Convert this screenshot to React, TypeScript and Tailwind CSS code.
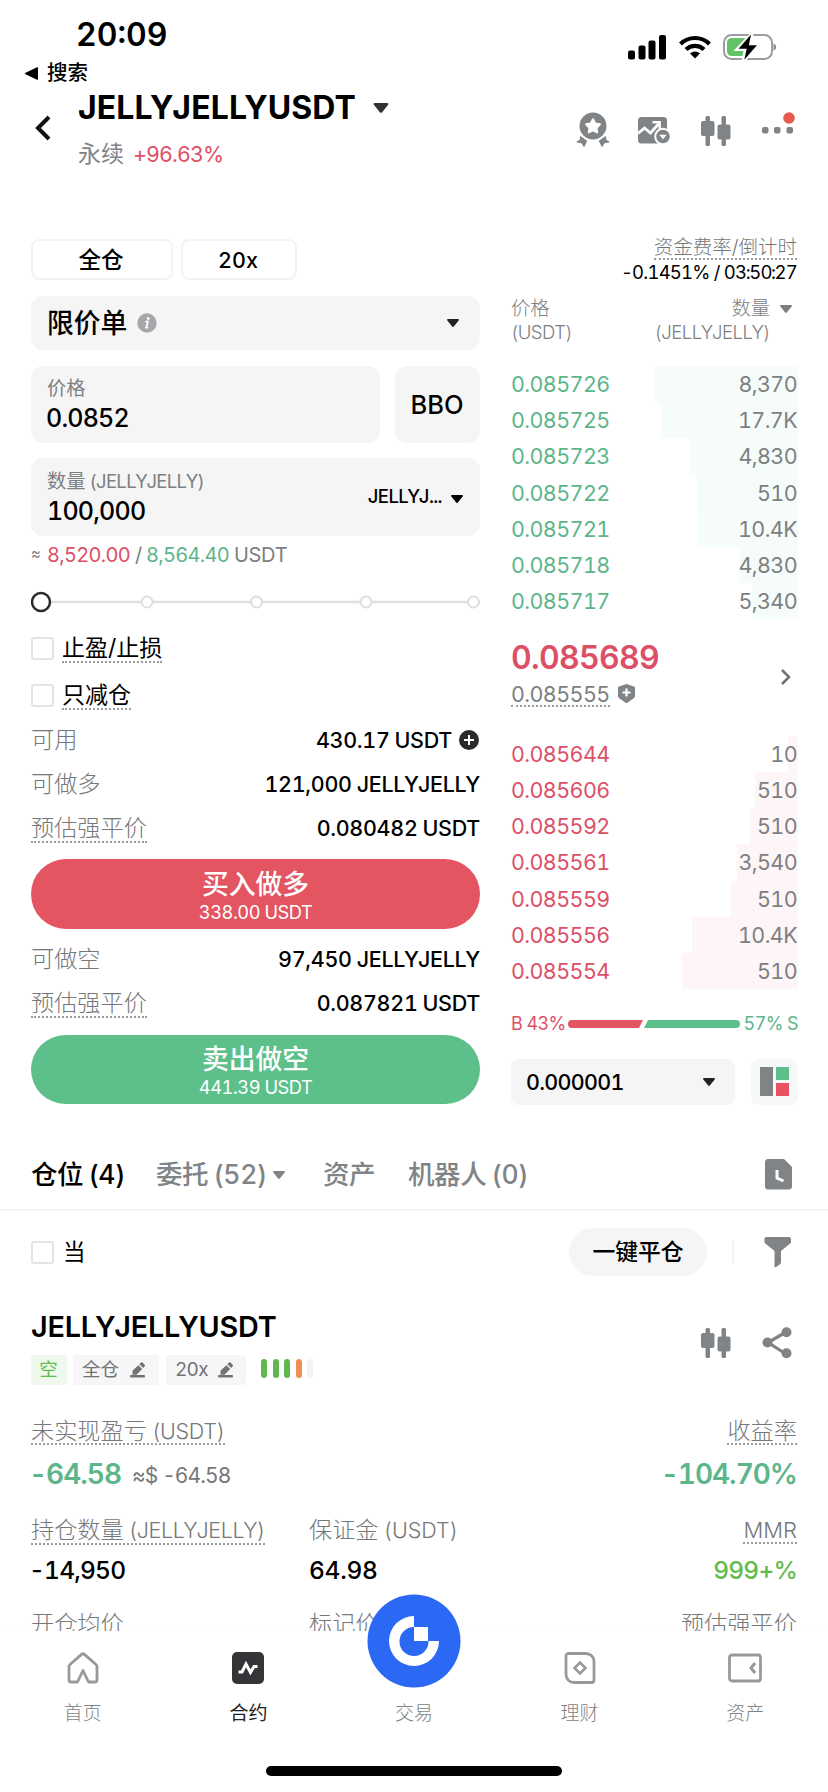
import React from "react";

const sellOrders = [
  { price: "0.085726", amount: "8,370", depth: 144 },
  { price: "0.085725", amount: "17.7K", depth: 137 },
  { price: "0.085723", amount: "4,830", depth: 108 },
  { price: "0.085722", amount: "510", depth: 101 },
  { price: "0.085721", amount: "10.4K", depth: 100 },
  { price: "0.085718", amount: "4,830", depth: 58 },
  { price: "0.085717", amount: "5,340", depth: 46 },
];

const buyOrders = [
  { price: "0.085644", amount: "10", depth: 10 },
  { price: "0.085606", amount: "510", depth: 43 },
  { price: "0.085592", amount: "510", depth: 48 },
  { price: "0.085561", amount: "3,540", depth: 61 },
  { price: "0.085559", amount: "510", depth: 67 },
  { price: "0.085556", amount: "10.4K", depth: 106 },
  { price: "0.085554", amount: "510", depth: 116 },
];

function Caret({ className = "" }: { className?: string }) {
  return (
    <svg viewBox="0 0 12 8" className={className} fill="currentColor">
      <path d="M1 0h10c.9 0 1.200.8.7 1.400L6.800 7.500c-.4.500-1.200.500-1.600 0L.3 1.400C-.2.800.1 0 1 0z" />
    </svg>
  );
}

function Dotted({ children, className = "" }: { children: React.ReactNode; className?: string }) {
  return (
    <span className={`-mb-[2px] inline-block border-b-2 border-dotted border-[#9a9c9e] leading-[25px] ${className}`}>
      {children}
    </span>
  );
}

function Unit({ children, className = "" }: { children: React.ReactNode; className?: string }) {
  return <span className={`ml-[5px] text-[21.5px] ${className}`}>{children}</span>;
}

function Candles() {
  return (
    <svg width="30" height="30" viewBox="0 0 30 30" fill="#808486">
      <rect x="4.500" y="0" width="4.500" height="30" rx="1.500" />
      <rect x="0" y="5" width="13.500" height="15" rx="2" />
      <rect x="20.500" y="0" width="4.500" height="30" rx="1.500" />
      <rect x="16.500" y="8.500" width="13" height="15" rx="2" />
    </svg>
  );
}

function Pencil() {
  return (
    <svg width="16" height="16" viewBox="0 0 16 16" fill="#6f7375">
      <path d="M8.300 3.200 12.200 7 7 12.200c-.4.400-.8.500-1.300.5H2.500V9.600c0-.5.200-.9.500-1.300z" />
      <path d="M9.300 2.200 10.700.8c.6-.6 1.400-.6 2 0l1.800 1.800c.6.6.6 1.400 0 2L13.200 6z" />
      <rect x="0" y="13" width="15" height="2.400" rx="1" />
    </svg>
  );
}

function OrderRows({ orders, text, bar }: { orders: typeof sellOrders; text: string; bar: string }) {
  return (
    <div>
      {orders.map((order) => (
        <div key={order.price} className="relative flex h-[36.2px] items-center justify-between text-[21.5px] tracking-[-0.6px]">
          <div className={`absolute inset-y-0 right-0 ${bar}`} style={{ width: order.depth }} />
          <span className={`relative ${text}`}>{order.price}</span>
          <span className="relative pr-[1px] text-[#7d8082]">{order.amount}</span>
        </div>
      ))}
    </div>
  );
}

function Checkbox() {
  return <span className="block h-[23px] w-[23px] rounded-[3px] border-2 border-[#e4e4e4]" />;
}

function StatusBar() {
  return (
    <div className="flex h-[92px] justify-between">
      <div className="pt-[18px]">
        <div className="pl-[76px] text-[32px] leading-[33px] font-semibold">20:09</div>
        <div className="mt-[12px] flex items-center pl-[25px] text-[20.5px] leading-[20px] font-medium">
          <svg width="13" height="13" viewBox="0 0 13 13" className="mr-[9px]">
            <path d="M12 .3c.6-.2 1 .1 1 .7v11c0 .600-.4.900-1 .700L.600 7.200c-.7-.3-.7-1.100 0-1.400z" />
          </svg>
          搜索
        </div>
      </div>
      <div className="mt-[33px] mr-[51px] flex h-[28px] items-center">
        <svg width="39" height="25" viewBox="0 0 39 25">
          <rect x="0" y="15.500" width="7" height="9" rx="2" />
          <rect x="10.500" y="10.500" width="7" height="14" rx="2" />
          <rect x="20.500" y="5.500" width="7" height="19" rx="2" />
          <rect x="31" y="0" width="7" height="24.500" rx="2" />
        </svg>
        <svg width="32" height="24" viewBox="0 0 32 24" className="ml-[12px]" fill="none" stroke="#000" strokeWidth="4.200">
          <path d="M1.500 9a20.500 20.500 0 0 1 29 0" />
          <path d="M7 14.500a12.800 12.800 0 0 1 18 0" />
          <path d="M16 23.500l-5-5a7.200 7.200 0 0 1 10 0z" fill="#000" stroke="none" />
        </svg>
        <svg width="54" height="28" viewBox="0 0 54 28" className="ml-[12px]">
          <rect x="1" y="2" width="48" height="24" rx="7.500" fill="none" stroke="#9c9c9c" strokeWidth="2" />
          <path d="M50.500 10.500c3.600 1 3.600 6 0 7z" fill="#8c8c8c" />
          <rect x="4" y="5" width="21" height="18" rx="4.500" fill="#62c466" />
          <path d="M28.500 1.500 15 16h8l-2.500 11.500L34.500 12h-8z" stroke="#fff" strokeWidth="4" />
          <path d="M28 1.500 15.500 15.700h8.200l-2.400 11L34 12.300h-8.200z" />
        </svg>
      </div>
    </div>
  );
}

function Header() {
  return (
    <div className="flex h-[143px]">
      <svg width="16" height="26" viewBox="0 0 16 26" className="mt-[23px] ml-[35px]" fill="none" stroke="#111" strokeWidth="4">
        <path d="M14 2 3 13l11 11" />
      </svg>
      <div className="ml-[27px]">
        <div className="flex items-center text-[32px] leading-[32px] font-bold">
          <span className="w-[280px] tracking-[0.1px]">JELLYJELLYUSDT</span>
          <Caret className="ml-[15px] h-[10px] w-[16px] text-[#333]" />
        </div>
        <div className="mt-[18px] flex gap-[9px] text-[21.5px] leading-[25px]">
          <span className="text-[23px] text-[#808486]">永续</span>
          <span className="tracking-[-0.9px] text-[#dc5067]">+96.63%</span>
        </div>
      </div>
      <div className="relative mt-[20px] mr-[33px] ml-auto flex items-start">
        <svg width="34" height="35" viewBox="0 0 34 35" fill="#808486">
          <circle cx="17" cy="14" r="13.500" />
          <path d="M17 7.200l2.200 4.300 4.700.8-3.300 3.400.6 4.700-4.200-2-4.200 2 .6-4.700-3.300-3.400 4.700-.8z" fill="#fff" stroke="#fff" strokeWidth="2" strokeLinejoin="round" />
          <path d="M4.500 24.500l6.200 4.500-2.700 5.500-2.200-3.600-5-1 3.200-1.700z" stroke="#808486" strokeLinejoin="round" />
          <path d="M29.500 24.500l-6.200 4.500 2.700 5.500 2.200-3.600 5-1-3.200-1.700z" stroke="#808486" strokeLinejoin="round" />
        </svg>
        <svg width="33" height="30" viewBox="0 0 33 30" className="mt-[4px] ml-[27px]">
          <rect x="1" y="1" width="29" height="26.500" rx="3.500" fill="#808486" />
          <path d="M1 17.500l6.500-5.500 6 5 8-9" fill="none" stroke="#fff" strokeWidth="2.800" />
          <path d="M15.500 6.300h7.200v7" fill="none" stroke="#fff" strokeWidth="2.400" />
          <circle cx="26" cy="20.500" r="8.800" fill="#fff" />
          <circle cx="26" cy="20.500" r="6.800" fill="#808486" />
          <path d="M22.300 18.800h7.400L26 23.600z" fill="#fff" />
        </svg>
        <div className="mt-[4px] ml-[31px]">
          <Candles />
        </div>
        <svg width="33" height="26" viewBox="0 0 33 26" className="ml-[31px]" fill="#808486">
          <rect x="0" y="15" width="6.500" height="6.500" rx="2" />
          <rect x="12" y="15" width="6.500" height="6.500" rx="2" />
          <rect x="24.500" y="15" width="6.500" height="6.500" rx="2" />
          <circle cx="27" cy="6" r="5.800" fill="#e45b4c" />
        </svg>
      </div>
    </div>
  );
}

function InfoRow({ label, dotted, children }: { label: string; dotted?: boolean; children: React.ReactNode }) {
  return (
    <div className="flex h-[44px] items-center justify-between text-[21.5px]">
      <span className="text-[23.2px] font-light text-[#75787a]">{dotted ? <Dotted>{label}</Dotted> : label}</span>
      <span className="flex items-center font-medium tracking-[-0.3px] [word-spacing:-0.5px]">{children}</span>
    </div>
  );
}

function OrderForm() {
  return (
    <div className="w-[449px] pt-[4px]">
      <div className="flex h-[41px] gap-[8px] text-[22.5px] font-medium">
        <div className="flex w-[142px] items-center justify-center rounded-[8px] border-2 border-[#f3f3f3] pr-[2px]">全仓</div>
        <div className="flex w-[116px] items-center justify-center rounded-[8px] border-2 border-[#f3f3f3] pt-[1px] pr-[2px] text-[21.5px]">20x</div>
      </div>
      <div className="mt-[16px] flex h-[54px] items-center rounded-[12px] bg-[#f5f5f5] pr-[21px] pl-[16px] text-[26.8px] font-medium">
        限价单
        <svg width="20" height="20" viewBox="0 0 20 20" className="ml-[10px]">
          <circle cx="10" cy="10" r="9.700" fill="#a5a7aa" />
          <circle cx="11.300" cy="5.500" r="1.400" fill="#fff" />
          <path d="M8.300 8.700h2.600l-1.500 5.800M8 14.700h3.200" fill="none" stroke="#fff" strokeWidth="1.700" />
        </svg>
        <Caret className="ml-auto h-[8px] w-[12px] text-[#222]" />
      </div>
      <div className="mt-[16px] flex h-[77px] gap-[15px]">
        <div className="w-[349px] rounded-[12px] bg-[#f5f5f5] pt-[11px] pl-[16px]">
          <div className="text-[19.3px] leading-[23px] text-[#7d8082]">价格</div>
          <div className="mt-[4px] -ml-px text-[25px] leading-[28px] font-medium tracking-[-0.8px]">0.0852</div>
        </div>
        <div className="flex flex-1 items-center justify-center rounded-[12px] bg-[#f5f5f5] pt-[2px] pr-[1px] text-[25.5px] font-medium">BBO</div>
      </div>
      <div className="mt-[15px] flex h-[78px] items-center rounded-[12px] bg-[#f5f5f5] pr-[17px] pl-[16px]">
        <div>
          <div className="text-[19.3px] leading-[23px] text-[#7d8082]">
            数量<span className="ml-[4px] text-[18.5px] tracking-[-0.7px]">(JELLYJELLY)</span>
          </div>
          <div className="mt-[4px] text-[25px] leading-[28px] font-medium tracking-[-0.8px]">100,000</div>
        </div>
        <span className="ml-auto pb-[3px] text-[18.5px] leading-[20px] font-medium tracking-[-0.6px]">JELLYJ...</span>
        <Caret className="mt-[4px] ml-[9px] h-[8px] w-[12px]" />
      </div>
      <div className="flex h-[36px] items-center gap-[5px] pt-[1px] text-[20px] text-[#7d8082]">
        <span className="w-[11px] text-[15px]">≈</span>
        <span className="w-[83px] tracking-[-0.7px] text-[#dc5067]">8,520.00</span>
        <span className="w-[6px]">/</span>
        <span className="w-[83px] tracking-[-0.7px] text-[#5db58a]">8,564.40</span>
        <span className="tracking-[-0.3px]">USDT</span>
      </div>
      <svg width="449" height="22" viewBox="0 0 449 22" className="mt-[19px]" fill="#fff">
        <path d="M10 11h432" stroke="#e0e0e0" strokeWidth="2.500" />
        <circle cx="116" cy="11" r="5.500" stroke="#dedede" strokeWidth="2" />
        <circle cx="225.500" cy="11" r="5.500" stroke="#dedede" strokeWidth="2" />
        <circle cx="335" cy="11" r="5.500" stroke="#dedede" strokeWidth="2" />
        <circle cx="442.500" cy="11" r="5.500" stroke="#dedede" strokeWidth="2" />
        <circle cx="10" cy="11" r="9" stroke="#2c2c2e" strokeWidth="2.500" />
      </svg>
      <div className="mt-[12px] flex h-[47px] items-center gap-[8px] text-[23px]">
        <Checkbox />
        <Dotted>止盈/止损</Dotted>
      </div>
      <div className="flex h-[47px] items-center gap-[8px] text-[23px]">
        <Checkbox />
        <Dotted>只减仓</Dotted>
      </div>
      <div className="-mt-px">
        <InfoRow label="可用">
          430.17 USDT
          <svg width="20" height="20" viewBox="0 0 20 20" className="mr-[1px] ml-[7px]">
            <circle cx="10" cy="10" r="10" fill="#2a2b2d" />
            <path d="M10 5v10M5 10h10" stroke="#fff" strokeWidth="2" />
          </svg>
        </InfoRow>
        <InfoRow label="可做多">121,000 JELLYJELLY</InfoRow>
        <InfoRow label="预估强平价" dotted>0.080482 USDT</InfoRow>
      </div>
      <button className="mt-[9px] block h-[70px] w-full rounded-full bg-[#e35561] pt-[3px] text-white">
        <div className="text-[26.8px] leading-[28px] font-medium">买入做多</div>
        <div className="mt-[4px] text-[18.3px] leading-[20px] tracking-[-0.5px]">338.00 USDT</div>
      </button>
      <div className="mt-[8px]">
        <InfoRow label="可做空">97,450 JELLYJELLY</InfoRow>
        <InfoRow label="预估强平价" dotted>0.087821 USDT</InfoRow>
      </div>
      <button className="mt-[10px] block h-[69px] w-full rounded-full bg-[#5dbf8a] pt-[3px] text-white">
        <div className="text-[26.8px] leading-[28px] font-medium">卖出做空</div>
        <div className="mt-[4px] text-[18.3px] leading-[20px] tracking-[-0.5px]">441.39 USDT</div>
      </button>
    </div>
  );
}

function OrderBook() {
  return (
    <div className="ml-[31px] w-[287px]">
      <div className="-mt-[2px] h-[26px] pr-[1px] text-right text-[19.5px] font-light text-[#75787a]">
        <Dotted className="leading-[22px]!">资金费率/倒计时</Dotted>
      </div>
      <div className="pr-[1px] text-right text-[18.5px] leading-[26px] tracking-[-0.8px]">
        -0.1451% / 03<span className="-mx-[0.6px]">:</span>50<span className="-mx-[0.6px]">:</span>27
      </div>
      <div className="mt-[13px] flex h-[46px] justify-between text-[19.3px] leading-[20px] text-[#7d8082]">
        <div className="font-light">
          价格
          <div className="mt-[3px] text-[18.5px] leading-[22px] tracking-[-0.5px]">(USDT)</div>
        </div>
        <div className="pr-[28px] text-right font-light">
          <div className="relative">
            数量
            <Caret className="absolute top-[7px] -right-[22px] h-[8px] w-[12px]" />
          </div>
          <div className="mt-[3px] text-[18.5px] leading-[22px] tracking-[-0.5px]">(JELLYJELLY)</div>
        </div>
      </div>
      <div className="mt-[22px]">
        <OrderRows orders={sellOrders} text="text-[#5db58a]" bar="bg-[#f5fcf9]" />
      </div>
      <div className="mt-[20.6px] flex items-center justify-between">
        <div>
          <div className="pt-[1px] text-[32px] leading-[33px] font-semibold tracking-[-0.7px] text-[#dc5067]">0.085689</div>
          <div className="mt-[8px] flex h-[24px] items-center text-[21.5px] tracking-[-0.6px] text-[#7d8082]">
            <Dotted className="leading-[22px]!">0.085555</Dotted>
            <svg width="17" height="19" viewBox="0 0 17 19" className="ml-[8px]">
              <path d="M8.500 0 16 2.500c.6.200 1 .6 1 1.200V12c0 1-.4 1.700-1.200 2.200L9.300 18.700c-.5.400-1.100.4-1.600 0L1.200 14.200C.4 13.700 0 13 0 12V3.700c0-.6.400-1 1-1.200z" fill="#808486" />
              <path d="M8.500 4.500v8M4.500 8.500h8" stroke="#fff" strokeWidth="2.200" />
            </svg>
          </div>
        </div>
        <svg width="12" height="16" viewBox="0 0 12 16" className="mt-[8px] mr-[6px]" fill="none" stroke="#6f7375" strokeWidth="2.600">
          <path d="M2 1l7 7-7 7" />
        </svg>
      </div>
      <div className="mt-[30px]">
        <OrderRows orders={buyOrders} text="text-[#dc5067]" bar="bg-[#fdf5f6]" />
      </div>
      <div className="mt-[24.6px] flex h-[20px] items-center text-[18px] tracking-[-0.6px]">
        <span className="w-[57px] whitespace-nowrap text-[#dc5067]">B 43%</span>
        <svg width="172" height="8" viewBox="0 0 172 8">
          <path d="M4 0h71l-4 8H4a4 4 0 0 1 0-8z" fill="#e35561" />
          <path d="M80 0h88a4 4 0 0 1 0 8H76z" fill="#5dbf8a" />
        </svg>
        <span className="flex-1 text-right whitespace-nowrap text-[#5db58a]">57% S</span>
      </div>
      <div className="mt-[25px] flex h-[46px] justify-between">
        <div className="flex w-[224px] items-center justify-between rounded-[8px] bg-[#f5f5f5] pr-[20px] pl-[15px] text-[21.5px] font-medium tracking-[-0.7px]">
          0.000001
          <Caret className="h-[8px] w-[12px] text-[#222]" />
        </div>
        <div className="flex w-[47px] items-center justify-center rounded-[8px] bg-[#f7f8f8]">
          <svg width="29" height="29" viewBox="0 0 29 29">
            <rect x="0" y="0" width="13" height="29" fill="#808486" />
            <rect x="16" y="0" width="13" height="13" fill="#5dbf8a" />
            <rect x="16" y="16" width="13" height="13" fill="#e8515f" />
          </svg>
        </div>
      </div>
    </div>
  );
}

function Tabs() {
  return (
    <div className="flex h-[74px] items-center border-b-2 border-[#f4f4f4] pt-[3px] pr-[36px] pl-[31px] text-[26.5px] font-medium tracking-[-0.4px] text-[#808486] [word-spacing:-1.5px]">
      <span className="w-[125px] text-black">仓位 (4)</span>
      <span className="flex w-[167px] items-center">
        委托 (52)
        <Caret className="ml-[6px] h-[8px] w-[12px]" />
      </span>
      <span className="w-[85px]">资产</span>
      <span>机器人 (0)</span>
      <svg width="27" height="31" viewBox="0 0 27 31" className="ml-auto">
        <path d="M3 0h16l8 8v19.500c0 1.700-1.300 3-3 3H3c-1.700 0-3-1.300-3-3V3c0-1.700 1.300-3 3-3z" fill="#808486" />
        <path d="M12 11v8l6.500 3" fill="none" stroke="#fff" strokeWidth="3" />
      </svg>
    </div>
  );
}

function Position() {
  return (
    <div className="pr-[31px] pl-[31px]">
      <div className="flex h-[81px] items-center pt-[1px]">
        <Checkbox />
        <span className="ml-[9px] text-[22.5px]">当</span>
        <div className="ml-auto flex h-[48px] w-[138px] items-center justify-center rounded-full bg-[#f5f5f5] text-[22.8px] font-medium">
          一键平仓
        </div>
        <div className="ml-[25px] h-[24px] w-[2px] bg-[#f3f3f3]" />
        <svg width="28" height="31" viewBox="0 0 28 31" className="mr-[5px] ml-[30px]" fill="#808486">
          <path d="M2.500 0h22.500c1.200 0 2 .9 2 2v3c0 .7-.3 1.200-.8 1.600L17 14v11.500c0 .7-.4 1.300-1 1.700l-4.200 3c-.6.4-1.300 0-1.300-.7V14L1.300 6.600C.8 6.200.5 5.700.5 5V2c0-1.100.9-2 2-2z" />
        </svg>
      </div>
      <div className="mt-[20px] flex h-[73px] justify-between">
        <div>
          <div className="text-[28.8px] leading-[30px] font-semibold tracking-[-0.2px]">JELLYJELLYUSDT</div>
          <div className="mt-[13px] flex h-[30px] text-[19px] text-[#6f7375]">
            <span className="flex w-[36px] items-center justify-center rounded-[3px] bg-[#eef8ec] pr-[1px] text-[18.5px] text-[#64bb4c]">空</span>
            <span className="ml-[6px] flex w-[86px] items-center gap-[11px] rounded-[3px] bg-[#f6f6f7] pl-[9px] text-[18.5px]">
              全仓 <Pencil />
            </span>
            <span className="ml-[7px] flex w-[80px] items-center gap-[10px] rounded-[3px] bg-[#f6f6f7] pl-[9px] tracking-[-0.7px]">
              20x <Pencil />
            </span>
            <div className="mt-[4px] ml-[15px] flex h-[19px] gap-[5.5px]">
              <span className="w-[6px] rounded-full bg-[#5fb84e]" />
              <span className="w-[6px] rounded-full bg-[#5fb84e]" />
              <span className="w-[6px] rounded-full bg-[#5fb84e]" />
              <span className="w-[6px] rounded-full bg-[#f08e54]" />
              <span className="w-[6px] rounded-full bg-[#f3f3f4]" />
            </div>
          </div>
        </div>
        <div className="flex gap-[31px] pt-[15px] pr-[5px]">
          <div className="pt-[1px]">
            <Candles />
          </div>
          <svg width="30" height="32" viewBox="0 0 30 32" fill="#808486">
            <path d="M24 5 6 15.500 24 27" fill="none" stroke="#808486" strokeWidth="3.200" />
            <circle cx="24.500" cy="5.200" r="5" />
            <circle cx="5.500" cy="15.500" r="5" />
            <circle cx="24.500" cy="26.200" r="5" />
          </svg>
        </div>
      </div>
      <div className="mt-[34px] flex h-[24px] justify-between text-[23.2px] font-light text-[#75787a]">
        <Dotted>
          未实现盈亏<Unit className="tracking-[-0.3px]">(USDT)</Unit>
        </Dotted>
        <Dotted>收益率</Dotted>
      </div>
      <div className="mt-[14px] flex text-[28px] leading-[34px] font-semibold tracking-[-1px] text-[#5db58a]">
        <span className="-ml-[2px]">-64.58</span>
        <span className="ml-[11px] pt-[2px] text-[21px] font-normal tracking-[-0.9px] text-[#75787a]">≈$ -64.58</span>
        <span className="ml-auto">-104.70%</span>
      </div>
      <div className="mt-[25px] flex h-[24px] text-[23.2px] leading-[25px] font-light text-[#75787a]">
        <div className="w-[278px]">
          <Dotted>
            持仓数量<Unit className="tracking-[-0.4px]">(JELLYJELLY)</Unit>
          </Dotted>
        </div>
        <div>
          保证金<Unit>(USDT)</Unit>
        </div>
        <Dotted className="ml-auto text-[22px]">MMR</Dotted>
      </div>
      <div className="mt-[14px] flex text-[24.5px] leading-[28px] font-medium">
        <span className="-ml-[2px] w-[280px] tracking-[-0.8px]">-14,950</span>
        <span className="tracking-[-0.3px]">64.98</span>
        <span className="ml-auto tracking-[-0.8px] text-[#62bb4c]">999+%</span>
      </div>
      <div className="mt-[28px] flex text-[23.2px] leading-[24px] font-light text-[#75787a]">
        <span className="w-[278px]">开仓均价</span>
        标记价格
        <span className="ml-auto">预估强平价</span>
      </div>
    </div>
  );
}

function NavItem({ label, active, children }: { label: string; active?: boolean; children?: React.ReactNode }) {
  return (
    <div className="flex flex-1 flex-col items-center pt-[20px]">
      <div className="flex h-[34px] items-center">{children}</div>
      <div className={`mt-[18px] text-[19px] leading-[22px] ${active ? "text-[#222]" : "font-light text-[#808486]"}`}>{label}</div>
    </div>
  );
}

function BottomNav() {
  return (
    <div className="absolute inset-x-0 bottom-0 flex h-[161px] bg-white shadow-[0_-2px_8px_rgba(0,0,0,0.015)]">
      <NavItem label="首页">
        <svg width="32" height="32" viewBox="0 0 32 32" fill="none" stroke="#97999b" strokeWidth="2.800" strokeLinejoin="round">
          <path d="M14.300 2.600 3 12.500c-.6.500-1 1.200-1 2V28c0 1.200.8 2 2 2h6.500L16 18.500 21.500 30H28c1.200 0 2-.8 2-2V14.500c0-.8-.4-1.500-1-2L17.700 2.600c-1-.9-2.400-.9-3.400 0z" />
        </svg>
      </NavItem>
      <NavItem label="合约" active>
        <svg width="32" height="32" viewBox="0 0 32 32">
          <rect width="32" height="32" rx="5" fill="#333538" />
          <path d="M6.500 20h3.500l4-8 4.500 8.500 3.500-6h3.500" fill="none" stroke="#fff" strokeWidth="3" />
        </svg>
      </NavItem>
      <NavItem label="交易" />
      <NavItem label="理财">
        <svg width="32" height="32" viewBox="0 0 32 32" fill="none" stroke="#97999b" strokeWidth="2.800">
          <path d="M4 1.500h18a8 8 0 0 1 8 8V28a2.500 2.500 0 0 1-2.500 2.500H10a8 8 0 0 1-8-8V4A2.500 2.500 0 0 1 4 1.500z" />
          <path d="M16 10.500l5.500 5.500-5.500 5.500-5.500-5.500z" strokeWidth="2.600" />
        </svg>
      </NavItem>
      <NavItem label="资产">
        <svg width="34" height="30" viewBox="0 0 34 30" fill="none" stroke="#97999b" strokeWidth="2.800">
          <rect x="1.500" y="2" width="31" height="26" rx="2.500" />
          <path d="M27 10 23 15l4 5" strokeWidth="3" />
        </svg>
      </NavItem>
      <svg width="94" height="94" viewBox="0 0 94 94" className="absolute -top-[37px] left-[367px]">
        <circle cx="47" cy="47" r="46.500" fill="#2b68f3" />
        <path d="M47 22a25 25 0 1 0 25 25H61.500A14.500 14.500 0 1 1 47 33z" fill="#fff" />
        <rect x="47" y="33" width="14" height="14" fill="#fff" />
      </svg>
      <div className="absolute bottom-[16px] left-[266px] h-[10px] w-[296px] rounded-full bg-black" />
    </div>
  );
}

export default function App() {
  return (
    <div className="relative h-[1792px] w-[828px] overflow-hidden bg-white font-['Inter','Noto_Sans_CJK_SC',sans-serif] text-black tabular-nums">
      <StatusBar />
      <Header />
      <div className="flex h-[902px] pl-[31px]">
        <OrderForm />
        <OrderBook />
      </div>
      <Tabs />
      <Position />
      <BottomNav />
    </div>
  );
}
